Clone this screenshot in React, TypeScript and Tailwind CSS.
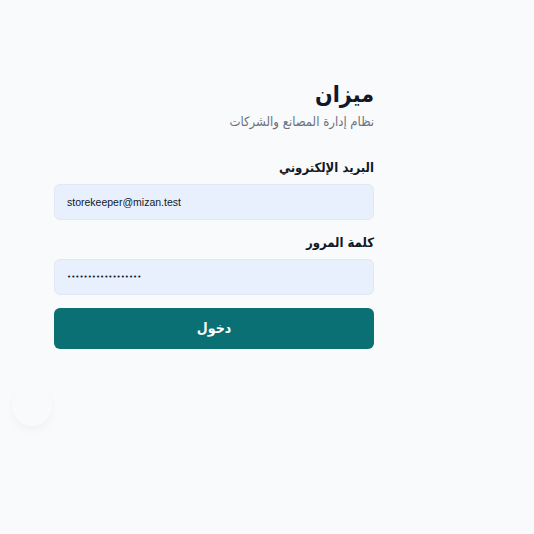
export default function App() {
  return (
    <div className="min-h-screen w-full bg-[#f8fafc] font-['DejaVu_Sans_Condensed','DejaVu_Sans',sans-serif] text-[#111827] relative">
      <div className="pl-[54px] pt-[75px]">
        <form dir="rtl" className="w-[320px] flex flex-col" onSubmit={(e) => e.preventDefault()}>
          <h1 className="text-[23px] font-bold leading-[38px]">ميزان</h1>
          <p className="text-[13px] text-[#6b7280] leading-[20px] mt-[-1px]">نظام إدارة المصانع والشركات</p>

          <label className="mt-[26px] text-[13px] font-bold leading-[20px]">البريد الإلكتروني</label>
          <input
            dir="ltr"
            type="email"
            defaultValue="storekeeper@mizan.test"
            className="mt-[6px] h-[36px] w-full rounded-md border border-[#e2e8f0] bg-[#e8f0fe] px-3 text-[10.5px] text-[#111827] font-['Liberation_Sans',sans-serif] outline-none"
          />

          <label className="mt-[13px] text-[13px] font-bold leading-[20px]">كلمة المرور</label>
          <input
            dir="ltr"
            type="password"
            defaultValue="storekeeper1234567"
            className="mt-[6px] h-[36px] w-full rounded-md border border-[#e2e8f0] bg-[#e8f0fe] px-3 text-[7px] text-[#111827] font-['DejaVu_Sans',sans-serif] outline-none"
          />

          <button
            type="submit"
            className="mt-[13px] h-[41px] w-full rounded-md bg-[#0b7073] text-white text-[14px] font-bold"
          >
            دخول
          </button>
        </form>
      </div>
      <div className="absolute left-[12px] top-[386px] h-[40px] w-[40px] rounded-full bg-[#f8fafc] shadow-[0_4px_10px_rgba(0,0,0,0.035)]" />
    </div>
  );
}
